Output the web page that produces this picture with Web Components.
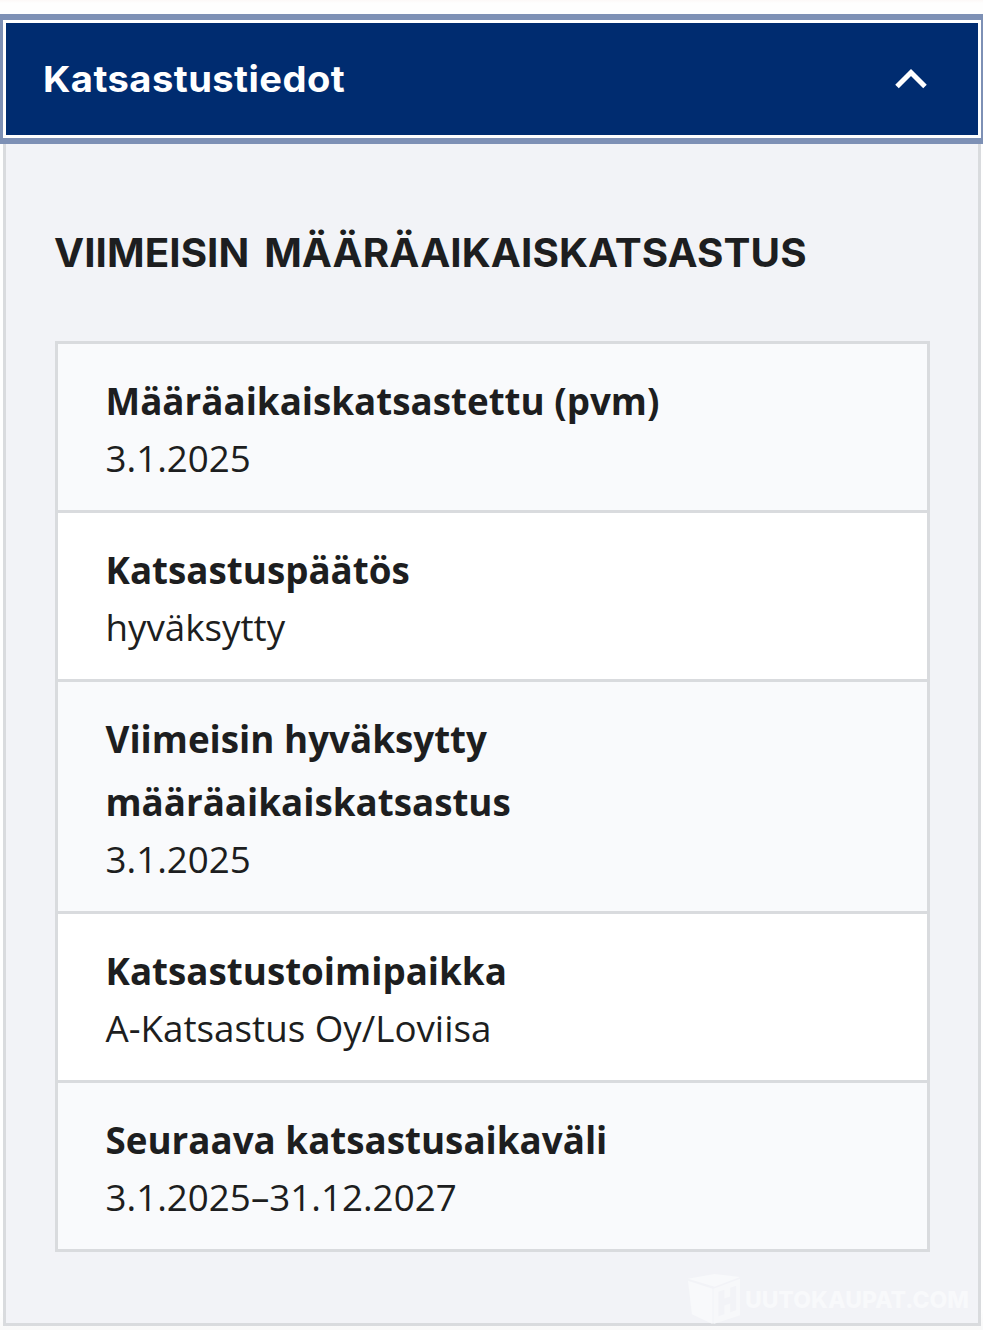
<!DOCTYPE html>
<html lang="fi">
<head>
<meta charset="utf-8">
<title>Katsastustiedot</title>
<style>
html,body{margin:0;height:1330px;overflow:hidden;background:#fefefe}
</style>
</head>
<body>
<accordion-panel heading="Katsastustiedot">
  <section-title>VIIMEISIN MÄÄRÄAIKAISKATSASTUS</section-title>
  <info-table>
    <info-row label="Määräaikaiskatsastettu (pvm)" shaded>3.1.2025</info-row>
    <info-row label="Katsastuspäätös">hyväksytty</info-row>
    <info-row label="Viimeisin hyväksytty määräaikaiskatsastus" shaded>3.1.2025</info-row>
    <info-row label="Katsastustoimipaikka">A-Katsastus Oy/Loviisa</info-row>
    <info-row label="Seuraava katsastusaikaväli" shaded>3.1.2025–31.12.2027</info-row>
  </info-table>
  <brand-mark slot="mark"></brand-mark>
</accordion-panel>
<script>
const define = (name, html, init) => {
  const template = document.createElement('template');
  template.innerHTML = html;
  customElements.define(name, class extends HTMLElement {
    constructor() {
      super();
      this.attachShadow({mode: 'open'}).append(template.content.cloneNode(true));
    }
    connectedCallback() { if (init) init(this, this.shadowRoot); }
  });
};

define('accordion-panel', `
<style>
:host{display:block;box-sizing:border-box;height:1330px;padding:20px 2px 0 3px;background:linear-gradient(#fcf8f7 0,#fefefe 3px,#fefefe 1310px,#f9f9f9 1328px)}
header{box-sizing:border-box;position:relative;display:flex;align-items:center;justify-content:space-between;height:118px;padding:0 51px 0 37px;border:3px solid #fff;background:#002c70;box-shadow:0 0 0 6px #7d90b5;z-index:1}
h2{margin:0;color:#fff;font:700 36px/50px Inter,sans-serif;letter-spacing:.4px;white-space:nowrap;transform:scaleX(1.06);transform-origin:0 50%}
svg{display:block;width:32px;height:22px}
.body{position:relative;box-sizing:border-box;height:1188px;padding:87px 48px 0 49px;border:3px solid #d9dbde;border-top:0;background:#f2f3f7}
.mark{position:absolute;right:9px;bottom:-2px}
</style>
<header><h2></h2><svg viewBox="0 0 32 22"><path d="M2 18.5 16 4.5l14 14" fill="none" stroke="#fff" stroke-width="5"/></svg></header>
<div class="body"><slot></slot><div class="mark"><slot name="mark"></slot></div></div>`,
(host, root) => { root.querySelector('h2').textContent = host.getAttribute('heading'); });

define('section-title', `
<style>
:host{display:block;height:116px;margin-left:-1px;color:#1d1e20;font:700 39px/56px Inter,sans-serif;letter-spacing:.06px;word-spacing:5px;white-space:nowrap;transform:scaleX(1.035);transform-origin:0 50%}
</style><slot></slot>`);

define('info-table', `
<style>
:host{display:block;box-sizing:border-box;border:3px solid #d9dbde;border-bottom:0}
</style><slot></slot>`);

define('info-row', `
<style>
:host{display:block;padding:26px 48px 26px 47.5px;border-bottom:3px solid #d9dbde;background:#fff;color:#1d1e20;font-family:"Open Sans",sans-serif}
:host([shaded]){background:#f9fafc}
.label{max-width:600px;font-size:36.75px;line-height:63px;font-weight:700}
.value{font-size:36.75px;line-height:51px}
:host([label^="Viimeisin"]) .label{max-width:500px}
</style>
<div class="label"></div><div class="value"><slot></slot></div>`,
(host, root) => { root.querySelector('.label').textContent = host.getAttribute('label'); });

define('brand-mark', `
<style>
:host{display:flex;align-items:center;gap:3px;color:#f8f9fb;font:800 23px/30px Inter,sans-serif;white-space:nowrap}
svg{display:block;width:55px;height:53px}
span{padding-top:2px}
</style>
<svg viewBox="0 0 56 52"><path d="M1 6 28 1l26 3-26 10zM1 8l25 8v36L5 42z" fill="#f8f9fb"/><path d="M27 16 54 6v37l-27 9zM32 19v25l6-2v-9l6-2v9l6-2V13l-6 2v9l-6 2v-9z" fill="#f7f8fa" fill-rule="evenodd"/></svg><span>UUTOKAUPAT.COM</span>`);
</script>
</body>
</html>
